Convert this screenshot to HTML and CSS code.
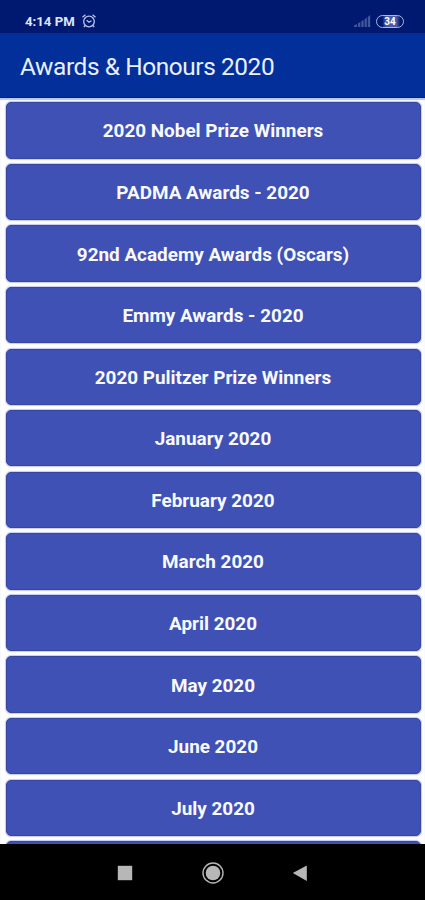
FILE: index.html
```html
<!DOCTYPE html>
<html lang="en">
<head>
  <meta charset="UTF-8">
  <meta name="viewport" content="width=device-width, initial-scale=1">
  <title>Awards &amp; Honours 2020</title>
  <link rel="stylesheet" href="styles.css">
</head>
<body>
  <div class="status-bar">
    <span class="time">4:14 PM</span>
    <svg class="alarm" width="16" height="16" viewBox="0 0 16 16">
      <circle cx="8" cy="8.5" r="5.3"/>
      <path d="M1.5 4.2L4.4 1.7M14.5 4.2L11.6 1.7M5.7 7.3L8 9.3L10.5 7.7M4.2 12.5L2.8 14M11.8 12.5L13.2 14"/>
    </svg>
    <svg class="signal" width="17" height="12" viewBox="0 0 17 12">
      <path d="M0 12V10.5L3 9V12zM4 12V8.3L6.3 7V12zM7.3 12V6.3L9.6 5V12zM10.6 12V4.2L12.8 2.8V12zM13.8 12V2L16.2 0V12z"/>
    </svg>
    <span class="battery">34</span>
  </div>

  <header class="app-bar">
    <h1>Awards &amp; Honours 2020</h1>
  </header>

  <main class="list">
    <button class="item">2020 Nobel Prize Winners</button>
    <button class="item">PADMA Awards - 2020</button>
    <button class="item">92nd Academy Awards (Oscars)</button>
    <button class="item">Emmy Awards - 2020</button>
    <button class="item">2020 Pulitzer Prize Winners</button>
    <button class="item">January 2020</button>
    <button class="item">February 2020</button>
    <button class="item">March 2020</button>
    <button class="item">April 2020</button>
    <button class="item">May 2020</button>
    <button class="item">June 2020</button>
    <button class="item">July 2020</button>
    <button class="item"></button>
  </main>

  <nav class="nav-bar">
    <svg width="22" height="22" viewBox="0 0 22 22">
      <rect x="3.8" y="3.8" width="14.4" height="14.4" fill="#b7b7b7"/>
    </svg>
    <svg width="22" height="22" viewBox="0 0 22 22">
      <circle cx="11" cy="11" r="10" fill="none" stroke="#b7b7b7" stroke-width="1.4"/>
      <circle cx="11" cy="11" r="7.3" fill="#b7b7b7"/>
    </svg>
    <svg width="22" height="22" viewBox="0 0 22 22">
      <path d="M2.8 11L16.8 3.5V19z" fill="#b7b7b7"/>
    </svg>
  </nav>
</body>
</html>
```

FILE: styles.css
```css
* {
  box-sizing: border-box;
}
body {
  display: flex;
  flex-direction: column;
  height: 900px;
  margin: 0;
  overflow: hidden;
  background: #fff;
  font-family: Roboto, sans-serif;
  color: #fff;
}
.status-bar {
  display: flex;
  align-items: center;
  flex: none;
  height: 33px;
  padding: 9px 21px 0 25px;
  background: #001970;
}
.time {
  font-size: 13.2px;
  font-weight: bold;
  color: #dfe5fa;
}
.alarm {
  margin-left: 6px;
  fill: none;
  stroke: #b9c4ec;
  stroke-width: 1.3;
}
.signal {
  margin-left: auto;
  fill: #43559b;
}
.battery {
  width: 28px;
  height: 13px;
  margin-left: 5px;
  border: 1.5px solid #aab5e0;
  border-radius: 7px;
  background: linear-gradient(90deg, #001970 20%, #4a5ba5 35%, #4a5ba5 75%, #001970 90%);
  font-size: 10px;
  font-weight: bold;
  line-height: 11px;
  text-align: center;
}
.app-bar {
  display: flex;
  align-items: center;
  flex: none;
  height: 65px;
  padding: 4px 20px 0;
  border-bottom: 1px solid #00217f;
  background: #032f9a;
}
h1 {
  margin: 0;
  font-size: 24.4px;
  font-weight: normal;
  line-height: 32px;
  letter-spacing: -0.4px;
  color: #e9f0ff;
  white-space: nowrap;
}
.list {
  flex: 1;
  min-height: 0;
  padding: 4.2px 4.5px 0 5.5px;
  box-shadow: inset 0 2px 1px #bac5ee;
  overflow: hidden;
}
.item {
  display: block;
  width: 100%;
  height: 56.4px;
  margin: 0 0 5.2px;
  padding: 1px 0 0;
  border: 1px solid #3546a3;
  border-radius: 5px;
  background: #3f51b5;
  box-shadow: 0 0 1px 1px #c5caf0;
  font-family: inherit;
  font-size: 18.9px;
  font-weight: bold;
  color: #f8faff;
}
.nav-bar {
  display: flex;
  align-items: center;
  justify-content: center;
  flex: none;
  gap: 66px;
  height: 56px;
  padding-top: 1px;
  background: #000;
}
```
